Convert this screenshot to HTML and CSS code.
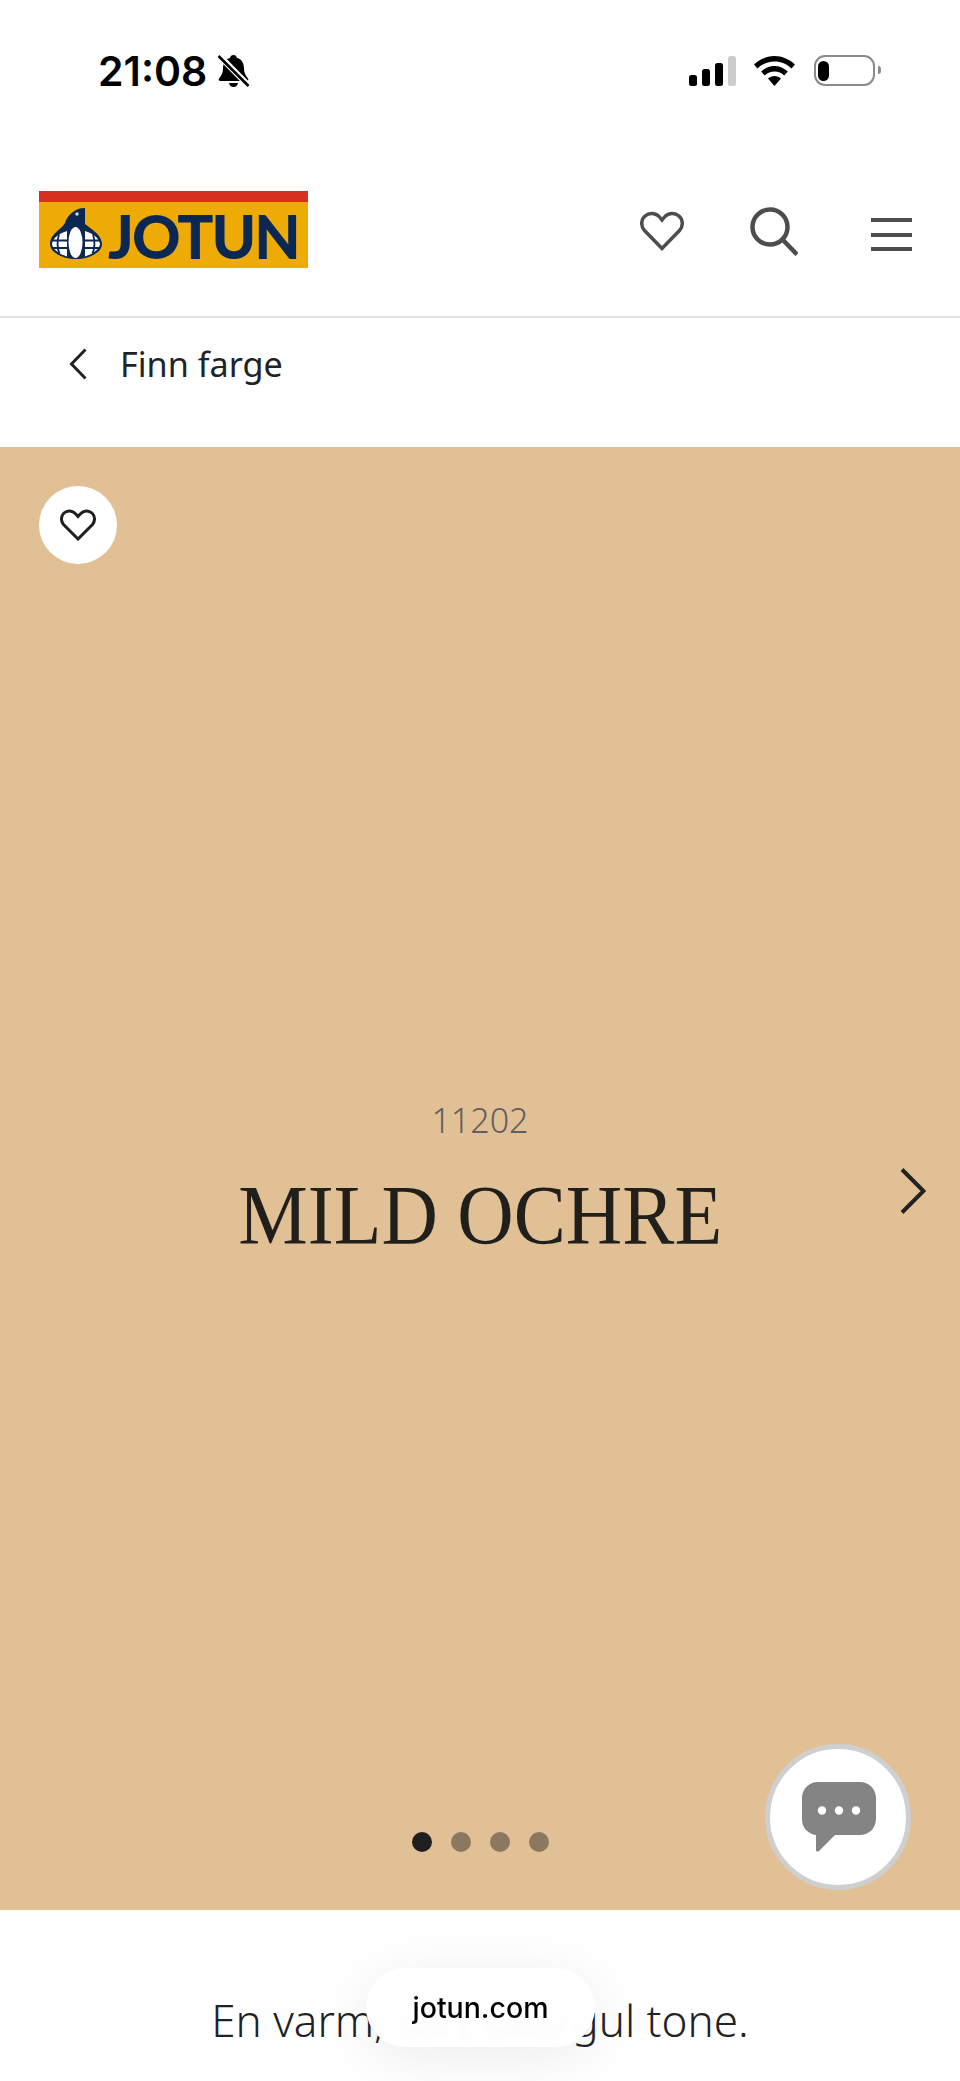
FILE: index.html
```html
<!DOCTYPE html>
<html lang="no">
<head>
<meta charset="utf-8">
<title>Mild Ochre 11202 - Jotun</title>
<link rel="stylesheet" href="styles.css">
</head>
<body>
<div class="page">
  <div class="status">
    <div class="status-left">
      <span class="clock">21:08</span>
      <svg class="bell" viewBox="0 0 33 34"><path d="M16.500 1c2 0 3 1 3.300 2.800C25 5.200 27 9.500 27 15c0 4 2 7 4 9.500.8 1.300 0 2.500-1.500 2.500H3.500C2 27 1.200 25.800 2 24.500 4 22 6 19 6 15 6 9.500 8 5.200 13.200 3.800 13.500 2 14.500 1 16.500 1zM12 29h9c-.5 2.500-2.200 4-4.500 4S12.500 31.500 12 29z" fill="#000"/><path d="M2 1.500 32 32" stroke="#fff" stroke-width="6"/><path d="M1.500 2 31.500 32" stroke="#000" stroke-width="2.600"/></svg>
    </div>
    <div class="status-right">
      <svg class="signal" viewBox="0 0 47 30"><rect x="0" y="19" width="8" height="11" rx="2.500" fill="#000"/><rect x="13" y="13" width="8" height="17" rx="2.500" fill="#000"/><rect x="26" y="7" width="8" height="23" rx="2.500" fill="#000"/><rect x="39" y="0" width="8" height="30" rx="2.500" fill="#ccc"/></svg>
      <svg class="wifi" viewBox="0 0 41 30"><path d="M20.500 0C28 0 35 3 41 8.500l-3.500 4C33 8 27 5.500 20.500 5.500S8 8 3.500 12.500L0 8.500C6 3 13 0 20.500 0z" fill="#000"/><path d="M20.500 10c5 0 9.500 2 13.300 5.500l-3.500 4c-2.800-2.500-6-4-9.800-4s-7 1.500-9.800 4l-3.500-4C11 12 15.500 10 20.500 10z" fill="#000"/><path d="M20.500 20c2.500 0 4.700.9 6.500 2.500L20.500 30 14 22.500c1.800-1.600 4-2.500 6.500-2.500z" fill="#000"/></svg>
      <div class="battery"><div class="battery-fill"></div></div>
    </div>
  </div>

  <header class="site-header">
    <a class="logo">
      <div class="logo-red"></div>
      <div class="logo-body">
        <svg class="emblem" viewBox="0 0 52 51"><path d="M35 0V16C38 19 52 26 52 36 52 44 40 51 26 51S0 44 0 36C0 26 12 21 15 15 17 8 24 0 35 0z" fill="#0b2855"/><path d="M17 23C10 25 2.500 30 2 36 2.500 41 9 46 17 48.500zM35 23C42 25 49.500 30 50 36 49.500 41 43 46 35 48.500z" fill="#fff"/><path d="M2 32.500H50M2 40H50M9 26.500C7 32 7 41 9.500 45.500M43 26.500C45 32 45 41 42.500 45.500" fill="none" stroke="#0b2855" stroke-width="1.800"/><ellipse cx="25.500" cy="34.500" rx="7" ry="15.500" fill="#fff"/><circle cx="27" cy="6" r="1.700" fill="#d5dde6"/></svg>
        <span class="logo-text">JOTUN</span>
      </div>
    </a>
    <nav class="header-icons">
      <svg class="ic-heart" viewBox="0 0 44 40"><path d="M22 37.500 4.500 19.500C.5 15 1 8.500 5 5c4.500-4 11-3.200 14.500 1L22 9l2.500-3C28 1.800 34.500 1 39 5c4 3.500 4.500 10 .5 14.500z" fill="none" stroke="#4d4d4d" stroke-width="3.500" stroke-linejoin="miter"/></svg>
      <svg class="ic-search" viewBox="0 0 48 49"><circle cx="20" cy="20" r="17.500" fill="none" stroke="#4d4d4d" stroke-width="4.500"/><path d="M32 32 47 47.500" stroke="#4d4d4d" stroke-width="4.500"/></svg>
      <div class="ic-menu"><span></span><span></span><span></span></div>
    </nav>
  </header>

  <div class="crumb">
    <svg class="ic-back" viewBox="0 0 18 32"><path d="M16.500 1.500 2.500 16l14 14.500" fill="none" stroke="#1f2328" stroke-width="3"/></svg>
    <span>Finn farge</span>
  </div>

  <section class="hero">
    <button class="fav" type="button" aria-label="Favoritt">
      <svg viewBox="0 0 36 32"><path d="M18 30 3.500 15.500C.5 12 1 6.800 4 4c3.500-3.200 8.500-2.600 11.500.8L18 7.500l2.500-2.700C23.500 1.400 28.500.8 32 4c3 2.800 3.500 8 .5 11.500z" fill="none" stroke="#1f1f1f" stroke-width="3"/></svg>
    </button>
    <p class="code">11202</p>
    <h1 class="name">MILD OCHRE</h1>
    <svg class="next" viewBox="0 0 26 46"><path d="M2 1.500 23.500 23 2 44.500" fill="none" stroke="#222" stroke-width="4"/></svg>
    <div class="dots"><i class="on"></i><i></i><i></i><i></i></div>
    <div class="chat">
      <svg viewBox="0 0 74 70"><path d="M16 0h42c9 0 16 7 16 16v21c0 9-7 16-16 16H33L17 69c-1.500 1.300-3 .5-3-1.500V53C6 52 0 46 0 37V16C0 7 7 0 16 0z" fill="#848484"/><circle cx="20" cy="28.500" r="4.200" fill="#fff"/><circle cx="37" cy="28.500" r="4.200" fill="#fff"/><circle cx="54" cy="28.500" r="4.200" fill="#fff"/></svg>
    </div>
  </section>

  <section class="desc">
    <p>En varm, sart okergul tone.</p>
  </section>

  <div class="url-pill"><span>jotun.com</span></div>
</div>
</body>
</html>
```

FILE: styles.css
```css
* { box-sizing: border-box; }
html, body { margin: 0; padding: 0; background: #fff; }
body { font-family: "Noto Sans", sans-serif; color: #1f2328; }
.page { position: relative; width: 960px; height: 2081px; overflow: hidden; display: flex; flex-direction: column; }

.status { height: 130px; flex: none; display: flex; justify-content: space-between; align-items: flex-start; padding: 50px 85px 0 98px; }
.status-left { display: flex; align-items: center; gap: 10px; }
.clock { font-family: Inter, sans-serif; font-weight: 600; font-size: 41px; line-height: 42px; color: #000; letter-spacing: 0; }
.bell { width: 33px; height: 34px; display: block; }
.status-right { display: flex; align-items: center; padding-top: 5px; }
.signal { width: 47px; height: 30px; display: block; margin-right: 18px; }
.wifi { width: 41px; height: 30px; display: block; margin-right: 19px; }
.battery { position: relative; width: 61px; height: 31px; border: 2.500px solid #8a8a8a; border-radius: 11px; padding: 3.500px 2px; }
.battery::after { content: ""; position: absolute; right: -8px; top: 9px; width: 3px; height: 8px; background: #8a8a8a; border-radius: 0 3px 3px 0; }
.battery-fill { width: 11px; height: 20px; background: #000; border-radius: 6px; }

.site-header { height: 188px; flex: none; border-bottom: 2px solid #e4e4e4; display: flex; justify-content: space-between; padding: 61px 48px 0 39px; }
.logo { display: block; width: 269px; height: 77px; background: #eeaa05; }
.logo-red { height: 11px; background: #d72f20; }
.logo-body { display: flex; align-items: flex-start; padding: 6px 0 0 11px; gap: 6px; }
.emblem { width: 52px; height: 51px; display: block; flex: none; }
.logo-text { font-family: Lato, sans-serif; font-weight: 900; font-size: 60px; line-height: 56px; color: #0b2855; letter-spacing: -2px; }
.header-icons { display: flex; align-items: flex-start; margin-top: -1px; }
.ic-heart { width: 44px; height: 40px; display: block; margin-top: 21px; margin-right: 66px; }
.ic-search { width: 48px; height: 49px; display: block; margin-top: 17px; margin-right: 73px; }
.ic-menu { width: 41px; height: 33px; margin-top: 28px; display: flex; flex-direction: column; justify-content: space-between; }
.ic-menu span { display: block; height: 4px; background: #4d4d4d; }

.crumb { height: 129px; flex: none; display: flex; align-items: flex-start; padding: 23px 0 0 69px; font-size: 34.200px; line-height: 46px; color: #1f2328; }
.ic-back { width: 18px; height: 32px; display: block; margin-top: 7px; margin-right: 33px; }

.hero { position: relative; height: 1463px; flex: none; background: #e2c096; display: flex; flex-direction: column; align-items: center; padding-top: 650px; }
.fav { position: absolute; left: 39px; top: 39px; width: 78px; height: 78px; border: 0; border-radius: 50%; background: #fff; padding: 0; display: flex; align-items: center; justify-content: center; }
.fav svg { width: 36px; height: 32px; display: block; }
.code { margin: 0; font-size: 34px; line-height: 46px; font-weight: 300; color: #5f5f5f; }
.name { margin: 26px 0 0; font-family: "Liberation Serif", serif; font-weight: 400; font-size: 84px; line-height: 94px; letter-spacing: 0; color: #211f1c; transform: scaleX(.93); white-space: nowrap; }
.next { position: absolute; left: 900px; top: 721px; width: 26px; height: 46px; }
.dots { position: absolute; left: 412px; top: 1385px; display: flex; gap: 19px; }
.dots i { display: block; width: 20px; height: 20px; border-radius: 50%; background: #8a7860; }
.dots i.on { background: #1f1f1f; }
.chat { position: absolute; left: 765px; top: 1297px; width: 146px; height: 146px; border-radius: 50%; border: 5px solid #cfcfcf; background: #fff; display: flex; align-items: flex-start; justify-content: center; padding-top: 33px; }
.chat svg { width: 74px; height: 70px; display: block; margin-left: 1px; }

.desc { flex: 1; text-align: center; padding-top: 80px; }
.desc p { margin: 0; font-size: 44px; line-height: 60px; font-weight: 300; color: #1f2328; }

.url-pill { position: absolute; left: 366px; top: 1968px; width: 229px; height: 79px; border-radius: 40px; background: linear-gradient(#fff 50%, rgba(255,255,255,.93)); backdrop-filter: blur(4px); box-shadow: 0 10px 60px rgba(0,0,0,.08); display: flex; justify-content: center; padding-top: 21px; }
.url-pill span { font-family: Inter, sans-serif; font-weight: 500; font-size: 28.500px; line-height: 38px; color: #000; }
```
